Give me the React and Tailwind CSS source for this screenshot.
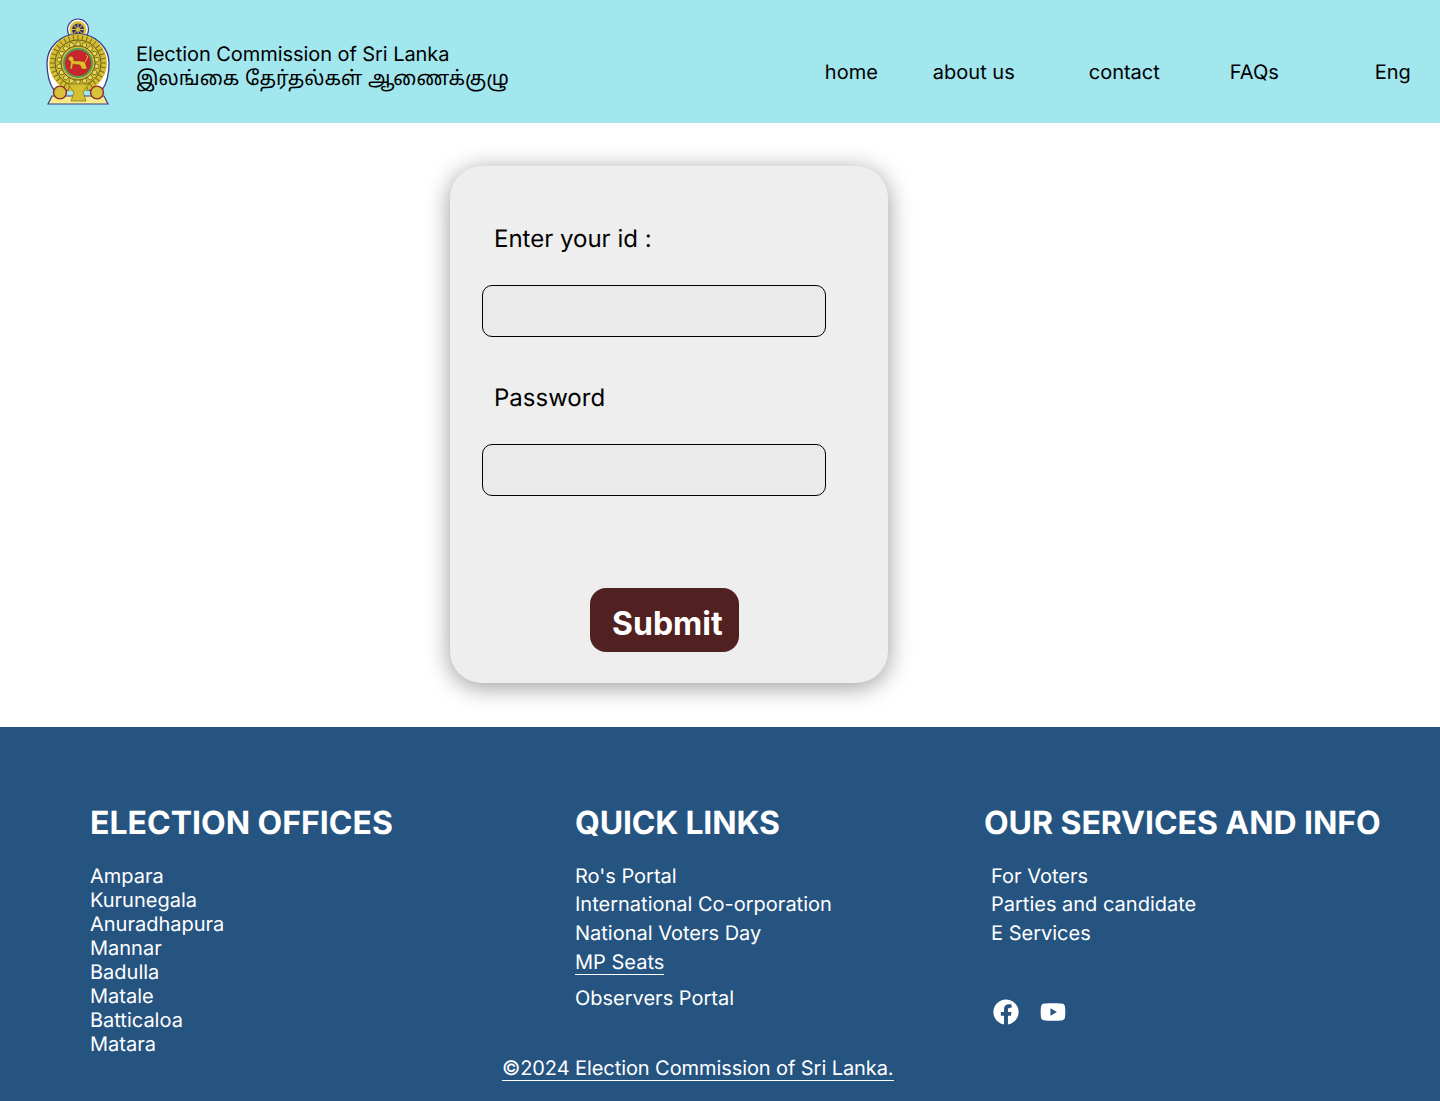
import { FaFacebook, FaYoutube } from "react-icons/fa";

const offices = ["Ampara", "Kurunegala", "Anuradhapura", "Mannar", "Badulla", "Matale", "Batticaloa", "Matara"];
const services = ["For Voters", "Parties and candidate", "E Services"];

function Emblem() {
  const petals = Array.from({ length: 18 }, (_, i) => (i * 360) / 18);
  const rays = Array.from({ length: 36 }, (_, i) => (i * 360) / 36);
  return (
    <svg viewBox="0 0 66 88" className="h-[88px] w-[66px] shrink-0">
      <circle cx="33" cy="11.5" r="10.5" fill="#fff" stroke="#3b3f8f" strokeWidth="1.2" />
      <circle cx="33" cy="11.5" r="8.5" fill="#d9c23a" />
      <circle cx="33" cy="11.5" r="6" fill="#33306e" />
      {[0, 45, 90, 135].map((a) => (
        <line key={a} x1="33" y1="5.5" x2="33" y2="17.5" stroke="#d9c23a" strokeWidth="1" transform={`rotate(${a} 33 11.5)`} />
      ))}
      <circle cx="33" cy="11.5" r="2" fill="#d9c23a" />
      <path d="M9 72 C3 64 2 52 2 45 C2 29 16 16 33 16 C50 16 64 29 64 45 C64 52 63 64 57 72 Z" fill="#fff" stroke="#3b3f8f" strokeWidth="1.3" />
      <circle cx="33" cy="45" r="29" fill="#d5bf30" />
      {rays.map((a) => (
        <line key={a} x1="33" y1="17" x2="33" y2="21.5" stroke="#7a6a18" strokeWidth="1" transform={`rotate(${a} 33 45)`} />
      ))}
      <circle cx="33" cy="45" r="23" fill="none" stroke="#3c3a20" strokeWidth="0.8" />
      {petals.map((a) => (
        <ellipse key={a} cx="33" cy="26.5" rx="2.3" ry="3" fill="#e8d85e" stroke="#5c5214" strokeWidth="0.7" transform={`rotate(${a} 33 45)`} />
      ))}
      <circle cx="33" cy="45" r="17" fill="#d5bf30" stroke="#3c3a20" strokeWidth="0.8" />
      <circle cx="33" cy="45" r="15" fill="#4f9a5c" />
      <circle cx="33" cy="45" r="13" fill="#c9252c" />
      <g transform="translate(66 -5) scale(-1 1)">
        <path d="M24 56 L26 49 L31 48 L37 48 L38 44 L41 43 L43 46 L40 49 L41 56 L39 56 L38 51 L31 52 L29 56 Z" fill="#e3bb2b" stroke="#6d4a0c" strokeWidth="0.4" />
        <path d="M26 49 L23 44 L25 42" fill="none" stroke="#e3bb2b" strokeWidth="1" />
      </g>
      <path d="M3 86 L7 78 L59 78 L63 86 Z" fill="#f5e98a" stroke="#3b3f8f" strokeWidth="1.2" />
      <circle cx="15" cy="74.5" r="6.4" fill="#d9c23a" stroke="#8a2a2a" strokeWidth="1.4" />
      <circle cx="52" cy="74.5" r="6.4" fill="#d9c23a" stroke="#8a2a2a" strokeWidth="1.4" />
      <path d="M23 66 L44 66 L38 74 L41 83 L26 83 L29 74 Z" fill="#d5bf30" stroke="#6f5f12" strokeWidth="0.6" />
    </svg>
  );
}

function Field({ label, className }) {
  return (
    <div className={className}>
      <label className="ml-3 block text-[24px] leading-[29px] text-black">{label}</label>
      <input type="text" className="mt-[32px] block h-[52px] w-[344px] rounded-[10px] border border-black bg-[#eaeaea]" />
    </div>
  );
}

export default function App() {
  return (
    <div className="w-[1440px] bg-white font-['Inter','Noto_Sans_Tamil','Noto_Sans',sans-serif] [font-optical-sizing:none] [text-rendering:geometricPrecision]">
      <header className="flex h-[123px] items-center bg-[#a2e6ee] pl-[45px] text-black">
        <Emblem />
        <div className="ml-[25px] mt-[9px] text-[20px] leading-[24px]">
          <div className="tracking-[-0.06px]">Election Commission of Sri Lanka</div>
          <div>இலங்கை தேர்தல்கள் ஆணைக்குழு</div>
        </div>
        <nav className="mt-[21px] flex text-[20px] leading-[24px]">
          <a className="ml-[316px]">home</a>
          <a className="ml-[55px]">about us</a>
          <a className="ml-[74px]">contact</a>
          <a className="ml-[70px]">FAQs</a>
          <a className="ml-[96px]">Eng</a>
        </nav>
      </header>

      <main className="h-[604px] pl-[450px] pt-[43px]">
        <div className="h-[517px] w-[438px] rounded-[32px] bg-[#eeeeee] pl-[32px] pt-[58px] shadow-[0_4px_24px_rgba(0,0,0,0.4)]">
          <Field label="Enter your id :" />
          <Field label="Password" className="mt-[46px]" />
          <button className="ml-[108px] mt-[92px] h-[64px] w-[149px] rounded-[16px] bg-[#512121] pl-[22px] pt-[6px] text-left text-[32px] font-bold leading-[39px] text-white">
            Submit
          </button>
        </div>
      </main>

      <footer className="relative h-[374px] bg-[#265481] pl-[90px] pt-[76px] text-[20px] text-white">
        <div className="flex">
          <div className="w-[485px]">
            <h2 className="text-[32px] font-bold leading-[39px]">ELECTION OFFICES</h2>
            <ul className="mt-[22px] leading-[24px]">
              {offices.map((name) => (
                <li key={name}>{name}</li>
              ))}
            </ul>
          </div>
          <div className="w-[409px]">
            <h2 className="text-[32px] font-bold leading-[39px] tracking-[-0.18px]">QUICK LINKS</h2>
            <ul className="mt-[22px] leading-[24px]">
              <li>Ro's Portal</li>
              <li className="mt-[4px]">International Co-orporation</li>
              <li className="mt-[5px]">National Voters Day</li>
              <li className="mt-[5px]">
                <a className="inline-block border-b border-white leading-[23px]">MP Seats</a>
              </li>
              <li className="mt-[11px]">Observers Portal</li>
            </ul>
          </div>
          <div>
            <h2 className="whitespace-nowrap text-[32px] font-bold leading-[39px] tracking-[-0.05px]">OUR SERVICES AND INFO</h2>
            <ul className="ml-[7px] mt-[22px] leading-[24px]">
              <li>{services[0]}</li>
              <li className="mt-[4px]">{services[1]}</li>
              <li className="mt-[5px]">{services[2]}</li>
            </ul>
            <div className="ml-[9px] mt-[54px] flex items-center gap-[21px]">
              <FaFacebook className="h-[26px] w-[26px]" />
              <FaYoutube className="h-[26px] w-[26px]" />
            </div>
          </div>
        </div>
        <a className="absolute bottom-[20px] left-[502px] border-b border-white leading-[24px] tracking-[-0.08px]">©2024 Election Commission of Sri Lanka.</a>
      </footer>
    </div>
  );
}
